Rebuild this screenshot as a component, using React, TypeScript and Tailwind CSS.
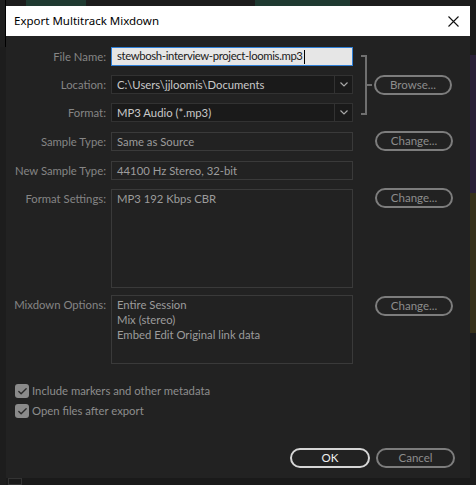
import { Check } from 'lucide-react';

const labelCls = "w-[100px] shrink-0 whitespace-nowrap text-right text-[11.3px] text-[#858585] leading-[19px]";

function Label({ children }: { children: string }) {
  return <div className={labelCls}>{children}</div>;
}

function PillButton({ children, light }: { children: string; light?: boolean }) {
  return (
    <div
      className={
        "flex h-full items-center justify-center rounded-full border-2 text-[11.5px] leading-none " +
        (light ? "border-[#d6d6d6] text-[#f0f0f0] " : "border-[#7d7d7d] text-[#8d8d8d] ")
      }
    >
      {children}
    </div>
  );
}

function Dropdown({ value }: { value: string }) {
  return (
    <div className="flex h-[19px] w-[242px] items-stretch border border-[#323232] bg-[#1a1a1a]">
      <div className="flex-1 pl-[5px] text-[11.3px] leading-[17px] text-[#c9c9c9]">{value}</div>
      <div className="flex w-[18px] items-center justify-center border-l border-[#323232]">
        <svg width="8" height="5" viewBox="0 0 8 5" fill="none">
          <path d="M0.5 0.5 L4 4 L7.5 0.5" stroke="#a8a8a8" strokeWidth="1.2" />
        </svg>
      </div>
    </div>
  );
}

function Field({ children, h = 19 }: { children: React.ReactNode; h?: number }) {
  return (
    <div
      className={
        "w-[242px] shrink-0 border border-[#3a3a3a] pl-[5px] text-[11.3px] text-[#9c9c9c] " +
        (h === 19 ? "h-[19px] leading-[17px]" : h === 99 ? "h-[99px] pt-[1px] leading-[15px]" : "h-[69px] pt-[1px] leading-[15px]")
      }
    >
      {children}
    </div>
  );
}

function CheckRow({ children }: { children: string }) {
  return (
    <div className="flex items-center gap-[3px]">
      <div className="flex h-[14px] w-[14px] items-center justify-center rounded-[3px] bg-[#8a8a8a]">
        <Check size={11} strokeWidth={3} color="#2a2a2a" />
      </div>
      <span className="whitespace-nowrap text-[11.3px] leading-[14px] text-[#8d8d8d]">{children}</span>
    </div>
  );
}

export default function App() {
  return (
    <div className="flex h-[485px] w-[476px] overflow-hidden bg-[#1b1b1b] font-['Lato',sans-serif]">
      {/* left edge of the app behind */}
      <div className="flex w-[6px] shrink-0 flex-col">
        <div className="h-[47px] border-r border-black bg-[#1f1f1f]" />
        <div className="flex-1 bg-[#1d1d1d]" />
      </div>

      <div className="flex w-[464px] shrink-0 flex-col">
        {/* top strip of the app */}
        <div className="flex h-[6px] shrink-0 bg-[#1d1d1d]">
          <div className="ml-[20px] w-[60px] bg-[#1f3a31]" />
          <div className="ml-[169px] w-[95px] bg-[#1f3a31]" />
        </div>

        {/* dialog */}
        <div className="flex h-[472px] shrink-0 flex-col">
          <div className="flex h-[30px] shrink-0 items-center justify-between bg-white pl-[8px] pr-[11px]">
            <span className="font-['Noto_Sans',sans-serif] text-[11.5px] text-black">Export Multitrack Mixdown</span>
            <svg width="11" height="11" viewBox="0 0 11 11">
              <path d="M0.5 0.5 L10.5 10.5 M10.5 0.5 L0.5 10.5" stroke="#111" strokeWidth="1.1" />
            </svg>
          </div>

          <div className="flex flex-1 flex-col bg-[#222222] pt-[11px]">
            {/* file name / location / format */}
            <div className="flex items-center">
              <div className="flex flex-col gap-[9px]">
                <div className="flex items-center gap-[5px]">
                  <Label>File Name:</Label>
                  <div className="flex h-[19px] w-[242px] items-center whitespace-nowrap border border-[#2f7fd6] bg-[#e6e6e6] pl-[5px] text-[11.3px] tracking-[-0.35px] text-[#1b1b1b]">
                    stewbosh-interview-project-loomis.mp3
                    <span className="ml-[1px] h-[14px] w-[1px] bg-black" />
                  </div>
                </div>
                <div className="flex items-center gap-[5px]">
                  <Label>Location:</Label>
                  <Dropdown value="C:\Users\jjloomis\Documents" />
                </div>
                <div className="flex items-center gap-[5px]">
                  <Label>Format:</Label>
                  <Dropdown value="MP3 Audio (*.mp3)" />
                </div>
              </div>
              <div className="ml-[8px] flex items-center">
                <div className="h-[60px] w-[6px] border-y-2 border-r-2 border-[#6f6f6f]" />
                <div className="h-[2px] w-[5px] bg-[#6f6f6f]" />
              </div>
              <div className="ml-[2px] h-[20px] w-[78px]">
                <PillButton>Browse...</PillButton>
              </div>
            </div>

            {/* sample type */}
            <div className="mt-[9px] flex items-center gap-[5px]">
              <Label>Sample Type:</Label>
              <Field>Same as Source</Field>
              <div className="ml-[17px] h-[20px] w-[78px]">
                <PillButton>Change...</PillButton>
              </div>
            </div>

            <div className="mt-[10px] flex items-center gap-[5px]">
              <Label>New Sample Type:</Label>
              <Field>44100 Hz Stereo, 32-bit</Field>
            </div>

            <div className="mt-[9px] flex items-start gap-[5px]">
              <Label>Format Settings:</Label>
              <Field h={99}>MP3 192 Kbps CBR</Field>
              <div className="-mt-[1px] ml-[17px] h-[20px] w-[78px]">
                <PillButton>Change...</PillButton>
              </div>
            </div>

            <div className="mt-[7px] flex items-start gap-[5px]">
              <Label>Mixdown Options:</Label>
              <Field h={69}>
                <div>Entire Session</div>
                <div>Mix (stereo)</div>
                <div>Embed Edit Original link data</div>
              </Field>
              <div className="ml-[17px] mt-[1px] h-[20px] w-[78px]">
                <PillButton>Change...</PillButton>
              </div>
            </div>

            <div className="ml-[9px] mt-[20px] flex flex-col gap-[6px]">
              <CheckRow>Include markers and other metadata</CheckRow>
              <CheckRow>Open files after export</CheckRow>
            </div>

            <div className="mt-[30px] flex justify-end gap-[6px] pr-[15px]">
              <div className="h-[20px] w-[80px]">
                <PillButton light>OK</PillButton>
              </div>
              <div className="h-[20px] w-[79px]">
                <PillButton>Cancel</PillButton>
              </div>
            </div>
          </div>
        </div>

        {/* bottom strip of the app */}
        <div className="flex flex-1 bg-[#1a1a1a]">
          <div className="ml-[2px] w-[14px] border border-[#333]" />
        </div>
      </div>

      {/* right edge of the app behind */}
      <div className="flex w-[6px] shrink-0 flex-col">
        <div className="h-[55px] bg-[#1c1c1c]" />
        <div className="h-[138px] bg-[#2a2038]" />
        <div className="h-[140px] bg-[#37311a]" />
        <div className="flex-1 bg-[#1c1c1c]" />
      </div>
    </div>
  );
}
